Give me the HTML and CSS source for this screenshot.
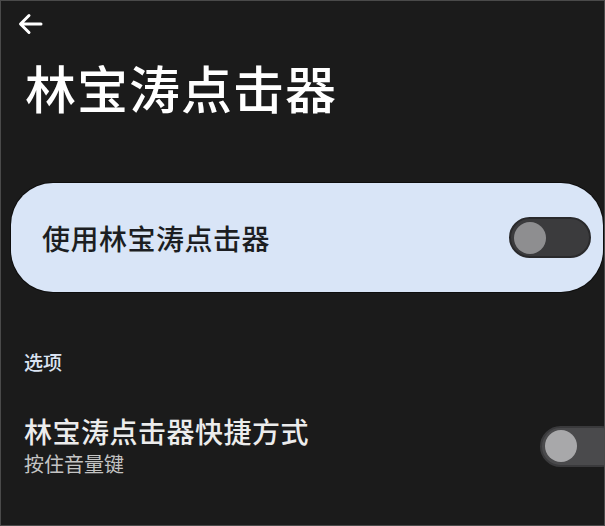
FILE: index.html
```html
<!DOCTYPE html>
<html lang="zh-CN">
<head>
<meta charset="utf-8">
<link rel="stylesheet" href="styles.css">
</head>
<body>
<div class="screen">
  <header class="topbar">
    <svg class="back" width="26" height="22" viewBox="0 0 26 22" aria-hidden="true">
      <path d="M24 11H4M12 2.5L3.5 11L12 19.5" fill="none" stroke="#ffffff" stroke-width="3" stroke-linecap="round" stroke-linejoin="round"/>
    </svg>
  </header>
  <h1 class="title">林宝涛点击器</h1>
  <div class="main-card">
    <span class="main-label">使用林宝涛点击器</span>
    <span class="switch switch-card"><span class="thumb"></span></span>
  </div>
  <div class="section">选项</div>
  <div class="row">
    <div class="row-text">
      <div class="row-title">林宝涛点击器快捷方式</div>
      <div class="row-sub">按住音量键</div>
    </div>
    <span class="switch switch-row"><span class="thumb"></span></span>
  </div>
</div>
</body>
</html>
```
FILE: styles.css
```css
html, body {
  margin: 0;
  padding: 0;
  background: #1b1b1b;
}
body {
  width: 605px;
  height: 526px;
  overflow: hidden;
  font-family: "Noto Sans CJK SC", "Noto Sans", sans-serif;
}
.screen {
  box-sizing: border-box;
  width: 605px;
  height: 526px;
  border: 1px solid #4a4a4a;
  background: #1b1b1b;
  overflow: hidden;
  display: flex;
  flex-direction: column;
}
.topbar {
  height: 44px;
  display: flex;
  align-items: flex-start;
  padding: 12px 0 0 16px;
  box-sizing: border-box;
}
.back {
  display: block;
}
.title {
  margin: 12px 0 0 24px;
  font-size: 51px;
  line-height: 60px;
  font-weight: 500;
  color: #ffffff;
  letter-spacing: 1px;
}
.main-card {
  margin: 66px 0 0 10px;
  width: 592px;
  height: 109px;
  box-sizing: border-box;
  background: #d9e5f7;
  border-radius: 42px;
  display: flex;
  align-items: center;
  justify-content: space-between;
  padding: 0 12px 0 31px;
  box-shadow: 0 0 0 1px #0e0e0e;
}
.main-label {
  font-size: 28px;
  font-weight: 500;
  color: #1c1e22;
  letter-spacing: 0.5px;
}
.switch {
  position: relative;
  display: block;
  height: 41px;
  border-radius: 21px;
  box-sizing: border-box;
  flex: none;
}
.switch .thumb {
  position: absolute;
  width: 32px;
  height: 32px;
  border-radius: 50%;
}
.switch-card {
  width: 82px;
  background: #3b3b3d;
  border: 2px solid #2a2a2c;
}
.switch-card .thumb {
  background: #8e8e90;
  top: 2.5px;
  left: 3px;
}
.section {
  margin: 56px 0 0 23px;
  font-size: 19px;
  line-height: 28px;
  font-weight: 500;
  color: #dbe4f3;
}
.row {
  margin-top: 41px;
  display: flex;
  align-items: center;
  justify-content: space-between;
  padding-left: 23px;
}
.row-text {
  font-family: "Liberation Sans", "Noto Sans CJK SC", sans-serif;
}
.row-title {
  font-size: 28px;
  line-height: 33px;
  font-weight: 500;
  color: #ececec;
  letter-spacing: 0.5px;
}
.row-sub {
  margin-top: 3px;
  font-size: 20px;
  line-height: 24px;
  color: #c4c4c4;
}
.switch-row {
  width: 82px;
  margin-right: -18px;
  margin-top: -2px;
  background: #4a4a4c;
  border: 2px solid #3a3a3c;
}
.switch-row .thumb {
  background: #a8a8aa;
  top: 2.5px;
  left: 3px;
}
```
